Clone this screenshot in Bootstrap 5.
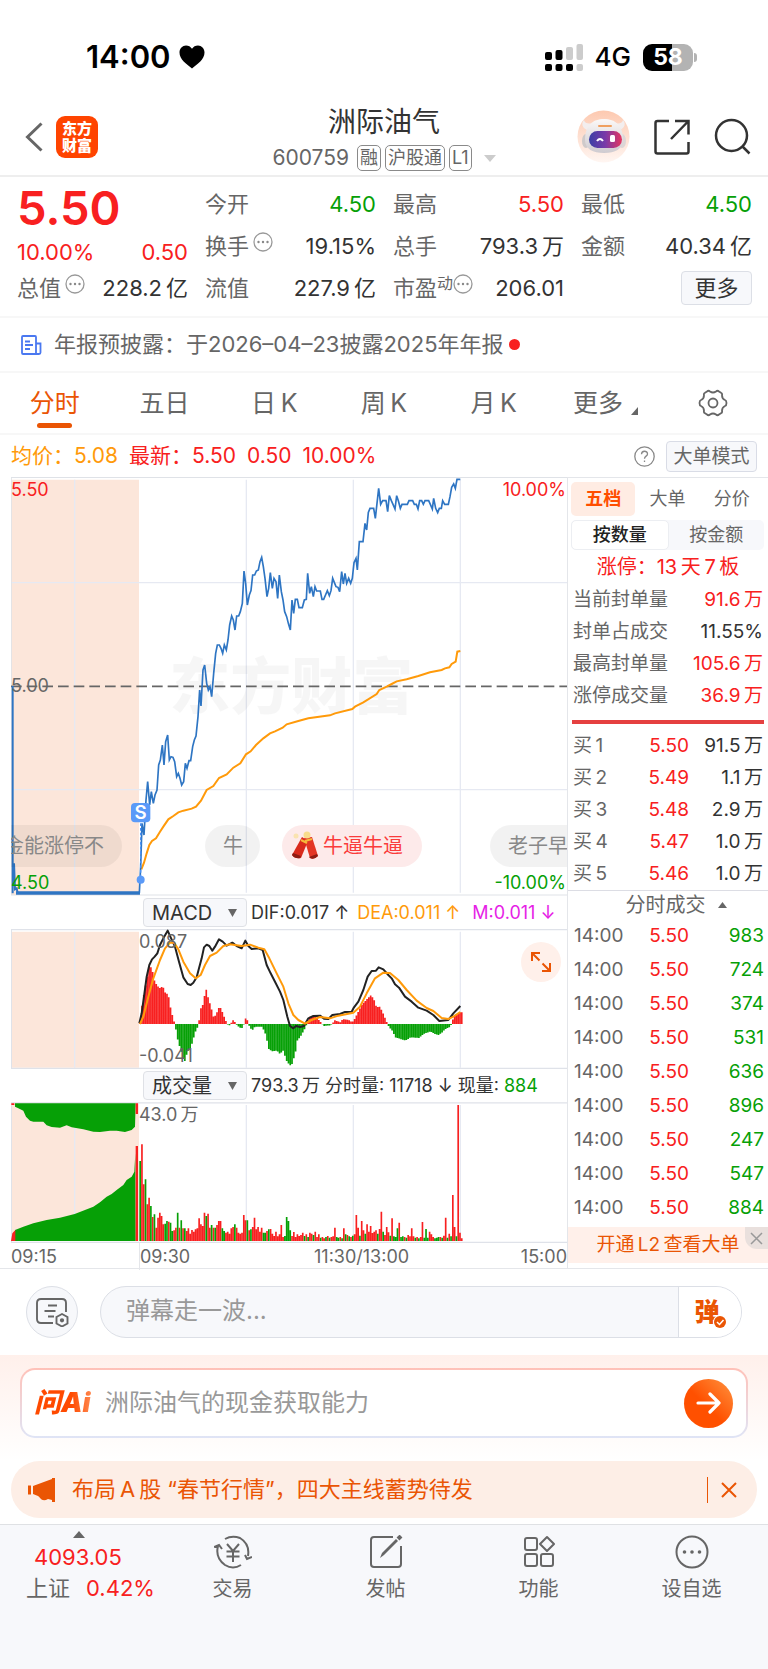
<!DOCTYPE html>
<html lang="zh-CN">
<head>
<meta charset="utf-8">
<meta name="viewport" content="width=device-width, initial-scale=1">
<title>洲际油气 600759</title>
<link href="https://cdn.jsdelivr.net/npm/bootstrap@5.3.0/dist/css/bootstrap.min.css" rel="stylesheet">
<style>
:root{--up:#f82020;--down:#06a006;--accent:#ea5504;--ink:#333;--muted:#666;--rule:#e4e6ea;--soft:#f7f8fb}
body{font-family:Inter,"Noto Sans CJK SC",sans-serif;font-size:22px;line-height:1.2;color:var(--ink);background:#fff}
svg{display:block;flex:none}
a{color:inherit;text-decoration:none}
.up{color:var(--up)}.down{color:var(--down)}.soft{color:var(--muted)}.accent{color:var(--accent)}.avg{color:#ff9a0a}.violet{color:#e61ee6}
.plain{border:0;background:none;padding:0;color:inherit;line-height:1}

.statusbar{padding:38px 71px 22px 86px;height:98px;color:#000}
.clock{font-size:31px;font-weight:600;line-height:38px}
.net{font-size:26px;font-weight:500}
.battery{width:50px;height:27px;border-radius:9px;background:linear-gradient(90deg,#000 58%,#b3b3b3 58%);color:#fff;font-size:23px;font-weight:700;line-height:27px}
.nub{width:3px;height:9px;margin-left:1px;border-radius:0 4px 4px 0;background:#b3b3b3}

.topbar{height:79px;border-bottom:2px solid #eee;padding:0 17px}
.applogo{width:42px;height:42px;border-radius:9px;background:#ff4400;color:#fff;font-size:15px;font-weight:900;line-height:17px;margin-left:13px}
.titlebox{padding-top:5px}
.stockname{font-size:28px;line-height:30px;font-weight:400;margin:0 0 8px}
.code{font-size:21px;line-height:26px;color:var(--muted)}
.tagbox{border:1px solid #8a8a8a;border-radius:5px;font-size:18px;line-height:24px;padding:0 2px}

.quotes{display:grid;grid-template-columns:repeat(4,1fr);column-gap:17px;grid-auto-rows:42px;align-items:center;padding:6px 16px 7px 17px;height:139px}
.quotes>div{display:flex;justify-content:space-between;align-items:center}
.quotes .label{color:var(--muted);display:flex;align-items:center}
.quotes .bigprice{font-size:47px;font-weight:600;line-height:42px;padding-top:7px}
.quotes .change{padding-top:12px}
.supe{font-size:16px;align-self:flex-start}
.morebtn{width:71px;height:34px;border:1px solid #dcdfe6;border-radius:4px;background:var(--soft);color:var(--ink);padding:0;line-height:1}

.notice{height:57px;border-top:2px solid #f7f7f7;border-bottom:2px solid #f7f7f7;padding:0 20px;color:var(--muted)}
.reddot{width:11px;height:11px;border-radius:50%;background:var(--up);margin-left:5px}
.periods{display:grid;grid-template-columns:repeat(7,1fr);height:62px;border-bottom:2px solid #f7f7f7;font-size:25px;color:var(--muted)}
.periods>*{display:flex;align-items:center;justify-content:center;position:relative}
.periods .on{color:var(--accent)}
.periods .on::after{content:"";position:absolute;bottom:5px;width:35px;height:5px;border-radius:3px;background:var(--accent)}
.summary{height:42px;padding:0 11px;font-size:21px;gap:11px}
.modebtn{width:91px;height:31px;border:1px solid #d9dce6;border-radius:4px;background:var(--soft);font-size:19px;color:var(--muted);padding:0;line-height:1}

.board{padding-left:11px;border-bottom:1px solid var(--rule)}
.plot{position:relative;overflow:hidden;font-size:18px;line-height:20px}
.plot>svg{width:100%;height:100%}
.plot-price{height:419px}.plot-macd{height:140px}.plot-vol{height:141px}
.tick{position:absolute;left:0}
.tick.end{left:auto;right:1px}
.tick.inner{left:23%}
.t-top{top:3px}.t-mid{top:199px}.t-bottom{bottom:3px}
.danmaku{position:absolute;left:0;right:0;top:348px;white-space:nowrap;font-size:20px;line-height:42px;color:#888}
.bubble{border-radius:21px;background:rgba(0,0,0,.05);padding:0 18px;flex:none}
.bubble.cut{width:111px;border-radius:0 21px 21px 0;padding:0 18px 0 0;display:flex;justify-content:flex-end;overflow:hidden}
.bubble.b2{margin-left:83px;width:55px}
.bubble.hot{margin-left:22px;background:#fdeaea;color:#fa3c3c;padding:0 18px 0 9px;width:140px}
.bubble.b4{margin-left:68px;padding-right:60px}
.expandbtn{position:absolute;right:6px;top:13px;width:40px;height:40px;border-radius:50%;background:#fff0ea;border:0;padding:0}
.toolbar{height:33px;padding-left:132px;font-size:18px;white-space:nowrap}
.picker{position:relative}
.picker select{appearance:none;width:104px;height:29px;border:1px solid #dfe1e6;border-radius:4px;background:var(--soft);font-size:20px;color:var(--ink);padding:0 8px;line-height:26px}
.picker svg{position:absolute;right:10px;top:11px;pointer-events:none}
.timeaxis{display:grid;grid-template-columns:128fr 175fr 253fr;font-size:18px;line-height:27px;height:25px;color:var(--muted)}
.timeaxis .tk{border-left:1px solid var(--rule)}

.side{width:201px;flex:none;border-left:1px solid var(--rule);border-top:1px solid var(--rule);padding-top:4px;font-size:19px}
.sidetabs{padding:0 4px 4px 3px}
.sidetabs button{flex:1;height:34px;border-radius:5px;font-size:18px;color:var(--muted)}
.sidetabs .on{background:#ffece3;color:#ff4e00;font-weight:700}
.seg{margin:0 4px 0 3px;background:var(--soft);border-radius:5px;height:30px}
.seg button{flex:1;font-size:18px;color:var(--muted)}
.seg .on{background:#fff;border:1px solid #eceef2;border-radius:5px;color:#222;font-weight:500}
.streak{line-height:34px;font-size:20px}
.kv{padding:0 5px;line-height:32px}
.divbar{height:4px;margin:8px 4px 6px;background:#e54040}
.grid3{width:100%;border-collapse:collapse;table-layout:fixed}
.grid3 td,.grid3 th{padding:0;font-weight:400}
.grid3 td:nth-child(2){text-align:right;width:55px}
.grid3 td:last-child{text-align:right}
.bids{line-height:32px}.bids th{padding-left:5px;width:66px}.bids td:last-child{padding-right:5px}
.dealhead{border-top:1px solid #dcdde4;line-height:28px;font-size:20px;width:100%}
.deals{line-height:34px}.deals td:first-child{padding-left:6px;width:66px}.deals td:last-child{padding-right:4px}
.l2{position:relative;margin-top:2px;height:36px;background:#fff0ea;line-height:36px;font-size:19px}
.l2 button{position:absolute;right:0;top:0;width:23px;height:22px;background:#e9e0dd;border-radius:0 0 0 12px}

.chatrow{padding:17px 26px 17px;gap:22px}
.roundbtn{width:52px;height:52px;border-radius:50%;border:1px solid #dcdfe6;background:var(--soft);padding:0;flex:none}
.chatbox{height:52px;border:1px solid #dcdfe6;border-radius:26px;background:var(--soft);overflow:hidden}
.chatbox input{border:0;background:none;font-size:24px;padding:0 25px 2px;min-width:0;outline:0;color:var(--muted)}
.chatbox input::placeholder,.aibox input::placeholder{color:#999;opacity:1}
.chatbox button{width:63px;border:0;border-left:1px solid #dcdfe6;background:#fff;position:relative;padding:0 6px 0 0;font-size:25px;font-weight:900;color:var(--accent);line-height:1}
.chatbox button svg{position:absolute;left:34px;top:28px}
.aizone{padding:13px 20px 23px;background:linear-gradient(#fff0eb,#fff)}
.aibox{height:70px;border:2px solid transparent;border-radius:15px;background:linear-gradient(#fff,#fff) padding-box,linear-gradient(#ffc1b8,#dfe4f6) border-box;padding:0 13px 0 12px}
.ailogo{font-size:27px;font-weight:900;font-style:italic;background:linear-gradient(90deg,#ff4a00 60%,#ff9560);-webkit-background-clip:text;color:transparent;white-space:nowrap;width:62px}
.aibox input{border:0;font-size:24px;padding:0 0 0 9px;min-width:0;outline:0}
.gobtn{width:49px;height:49px;border-radius:50%;border:0;padding:0;background:linear-gradient(45deg,#ff5000 45%,#ff9440)}
.promo{margin:0 11px 6px;height:57px;border-radius:29px;background:#fdeee6;padding:0 16px 0 17px;color:var(--accent)}
.promo a{margin-left:16px}
.vline{width:1px;height:26px;background:var(--accent);margin-right:13px}
.dock{display:grid;grid-template-columns:156px repeat(4,1fr);background:var(--soft);border-top:1px solid #dfe1e4;height:145px;padding-top:6px;color:var(--muted);font-size:20px}
.dock>a{display:flex;flex-direction:column;align-items:center;padding-top:4px}
.dock .cap{line-height:26px;margin-top:7px}
.dock .quote{align-items:flex-start;padding:0 0 0 26px}
.quote svg{margin-left:47px}
.index{font-size:22px;line-height:31px}
</style>
</head>
<body>

<div class="statusbar d-flex justify-content-between">
  <div class="d-flex align-items-center gap-2">
    <span class="clock">14:00</span>
    <svg width="26" height="24" viewBox="0 0 26 24"><path d="M13 23.5C7.500 19 .5 14.500.5 7.500.5 3.500 3.500.5 7 .5c2.500 0 4.700 1.200 6 3.300C14.300 1.700 16.500.5 19 .5c3.500 0 6.500 3 6.500 7 0 7-7 11.500-12.500 16z"/></svg>
  </div>
  <div class="d-flex align-items-center">
    <svg width="38" height="27" viewBox="0 0 38 27"><g><rect y="8" width="7" height="8" rx="2"/><rect x="10.500" y="6" width="7" height="10" rx="2"/><rect y="20" width="7" height="7" rx="2"/><rect x="10.500" y="20" width="7" height="7" rx="2"/><rect x="21" y="20" width="7" height="7" rx="2"/></g><g fill="#ccc"><rect x="21" y="3" width="7" height="13" rx="2"/><rect x="31.500" width="6.500" height="16" rx="2"/><rect x="31.500" y="20" width="6.500" height="7" rx="2"/></g></svg>
    <span class="net mx-2 ps-1 pe-1">4G</span>
    <span class="battery text-center">58</span><span class="nub"></span>
  </div>
</div>

<header class="topbar d-flex align-items-center">
  <div class="d-flex align-items-center flex-fill w-25 ps-2">
    <button class="plain" aria-label="返回"><svg width="18" height="30" viewBox="0 0 18 30"><path d="M16.500 1.500 2.500 15l14 13.500" fill="none" stroke="#666" stroke-width="3"/></svg></button>
    <div class="applogo d-flex flex-column justify-content-center text-center"><span>东方</span><span>财富</span></div>
  </div>
  <div class="titlebox text-center">
    <h1 class="stockname">洲际油气</h1>
    <div class="code d-flex align-items-center justify-content-center gap-1"><span class="me-1">600759</span><span class="tagbox">融</span><span class="tagbox">沪股通</span><span class="tagbox">L1</span>
      <svg class="ms-2" width="12" height="7"><path d="M0 0h12L6 7z" fill="#ccc"/></svg></div>
  </div>
  <div class="d-flex align-items-center justify-content-end flex-fill w-25">
    <button class="plain" aria-label="智能助手"><svg width="53" height="53" viewBox="0 0 53 53">
      <defs><linearGradient id="rb" x1="0" y1="0" x2="0" y2="1"><stop offset="0" stop-color="#fdc9b0"/><stop offset="1" stop-color="#fff6f2"/></linearGradient><linearGradient id="rf"><stop offset="0" stop-color="#3a3fa5"/><stop offset=".5" stop-color="#7a3aa8"/><stop offset="1" stop-color="#e5365f"/></linearGradient><linearGradient id="rh" x1="0" y1="0" x2="0" y2="1"><stop offset="0" stop-color="#fbf8f7"/><stop offset="1" stop-color="#cfcbd0"/></linearGradient></defs>
      <circle cx="26.500" cy="26.500" r="26" fill="url(#rb)"/><path d="M10 20C5 18 4 13 7 10c1 4 5 4 8 3zM43 20c5-2 6-7 3-10-1 4-5 4-8 3z" fill="#f3eeee"/>
      <ellipse cx="9" cy="31" rx="4" ry="7" fill="#cfcaca"/><ellipse cx="45" cy="31" rx="4" ry="7" fill="#ddd6d6"/>
      <path d="M8 30C8 15 16 9 27 9s19 6 19 21c0 9-8 13-19 13S8 39 8 30z" fill="url(#rh)"/>
      <rect x="12" y="21" width="33" height="17" rx="8.500" fill="url(#rf)"/><rect x="21" y="15" width="14" height="2" rx="1" fill="#f0a060"/><path d="M20 31q3-4 6 0" stroke="#fff" stroke-width="2" fill="none"/><rect x="33" y="25" width="5" height="7" rx="1.500" fill="#fff"/></svg></button>
    <button class="plain ms-4" aria-label="分享"><svg width="36" height="36" viewBox="0 0 36 36" fill="none" stroke="#333" stroke-width="2.500"><path d="M15 2H3.500Q1.500 2 1.500 4v28.500q0 2 2 2h29q2 0 2-2V23M21 2h13.500v13.500M34 2.500 17 20"/></svg></button>
    <button class="plain ms-4" aria-label="搜索"><svg width="37" height="37" viewBox="0 0 37 37" fill="none" stroke="#333" stroke-width="2.500"><circle cx="17.500" cy="17.500" r="15.500"/><path d="m28.500 28.500 7 7"/></svg></button>
  </div>
</header>

<section class="quotes">
  <div class="bigprice up">5.50</div>
  <div><span class="label">今开</span><span class="down">4.50</span></div>
  <div><span class="label">最高</span><span class="up">5.50</span></div>
  <div><span class="label">最低</span><span class="down">4.50</span></div>
  <div class="up change"><span>10.00%</span><span>0.50</span></div>
  <div><span class="label">换手<svg class="ms-1 mb-2" width="20" height="20" viewBox="0 0 20 20"><circle cx="10" cy="10" r="9" fill="none" stroke="#999" stroke-width="1.300"/><g fill="#888"><circle cx="5.500" cy="10" r="1.200"/><circle cx="10" cy="10" r="1.200"/><circle cx="14.500" cy="10" r="1.200"/></g></svg></span><span>19.15%</span></div>
  <div><span class="label">总手</span><span>793.3&#8201;万</span></div>
  <div><span class="label">金额</span><span>40.34&#8201;亿</span></div>
  <div><span class="label">总值<svg class="ms-1 mb-2" width="20" height="20" viewBox="0 0 20 20"><circle cx="10" cy="10" r="9" fill="none" stroke="#999" stroke-width="1.300"/><g fill="#888"><circle cx="5.500" cy="10" r="1.200"/><circle cx="10" cy="10" r="1.200"/><circle cx="14.500" cy="10" r="1.200"/></g></svg></span><span>228.2&#8201;亿</span></div>
  <div><span class="label">流值</span><span>227.9&#8201;亿</span></div>
  <div><span class="label">市盈<span class="supe">动</span><svg class="mb-2" width="20" height="20" viewBox="0 0 20 20"><circle cx="10" cy="10" r="9" fill="none" stroke="#999" stroke-width="1.300"/><g fill="#888"><circle cx="5.500" cy="10" r="1.200"/><circle cx="10" cy="10" r="1.200"/><circle cx="14.500" cy="10" r="1.200"/></g></svg></span><span>206.01</span></div>
  <div><button class="morebtn ms-auto">更多</button></div>
</section>

<a href="#" class="notice d-flex align-items-center">
  <svg width="22" height="20" viewBox="0 0 22 20" fill="none" stroke="#4a78f0" stroke-width="1.800"><path d="M16 19V2q0-1-1-1H3Q2 1 2 2v16q0 1 1 1h16q1.500 0 1.500-1.500V8.500H16M5 6.500h5M5 10h8M5 14h5"/></svg>
  <span class="ms-2 ps-1">年报预披露：于2026–04–23披露2025年年报</span><span class="reddot"></span>
</a>

<nav class="periods">
  <a href="#" class="on">分时</a><a href="#">五日</a><a href="#">日&#8201;K</a><a href="#">周&#8201;K</a><a href="#">月&#8201;K</a>
  <a href="#" class="ps-1">更多<svg class="ms-2 mt-3" width="7" height="8"><path d="M7 0v8H0z" fill="#666"/></svg></a>
  <button class="plain" aria-label="设置"><svg width="30" height="28" viewBox="0 0 30 28" fill="none" stroke="#666" stroke-width="1.800" stroke-linejoin="round"><path d="M9 2.500q1.500-1.500 3 0 3 2 6 0 1.500-1.500 3 0l2 1.200q1.500.8 1 2.500 0 3.500 3 4.800 1.500.5 1.500 3t-1.500 3q-3 1.300-3 4.800.5 1.700-1 2.500l-2 1.200q-1.500 1.500-3 0-3-2-6 0-1.500 1.500-3 0l-2-1.200q-1.500-.8-1-2.500 0-3.500-3-4.800-1.500-.5-1.500-3t1.500-3q3-1.300 3-4.800-.5-1.700 1-2.500z"/><circle cx="15" cy="14" r="4.500"/></svg></button>
</nav>

<div class="summary d-flex align-items-center">
  <span class="avg">均价：5.08</span>
  <span class="up">最新：5.50</span><span class="up">0.50</span><span class="up">10.00%</span>
  <button class="plain ms-auto" aria-label="说明"><svg width="21" height="21" viewBox="0 0 21 21" fill="none" stroke="#888" stroke-width="1.300"><circle cx="10.500" cy="10.500" r="9.700"/><path d="M7.500 8.300c0-4 6-4 6-.4 0 2.300-3 2.200-3 4.800M10.500 14.500V16"/></svg></button>
  <button class="modebtn">大单模式</button>
</div>

<main class="board d-flex">
  <div class="flex-fill">
    <div class="plot plot-price">
      <svg viewBox="33 21 1668 1257" preserveAspectRatio="none">
        <path d="M33 29H417V1275H33z" fill="#fce6da"/>
        <path d="M224 29V1268M739 29V1268M1060 29V1268M1381 29V1268M33 338H1701M33 959H1701" stroke="#e6e9f2" stroke-width="4" fill="none"/>
        <path d="M33 22.500H1701M33 1275H1701M34 22V1275" stroke="#dfe2e7" stroke-width="3" fill="none"/>
        <text x="508" y="716" font-size="183" font-weight="900" fill="#000" fill-opacity=".035">东方财富</text>
        <path d="M33 649H1701" stroke="#666" stroke-width="5" stroke-dasharray="32 15"/>
        <polyline fill="none" stroke="#ff9a0a" stroke-width="6" points="424,1198 432,1178 440,1150 448,1125 456,1113 468,1105 480,1085 492,1067 505,1048 520,1038 535,1027 550,1022 575,1016 588,1010 603,992 620,960 640,948 657,924 680,913 700,893 721,880 738,853 752,844 768,825 790,805 810,790 825,784 848,773 860,763 895,753 925,745 990,736 1005,730 1057,717 1065,710 1090,697 1130,672 1138,660 1160,650 1175,642 1190,634 1220,628 1255,618 1290,607 1325,600 1335,595 1348,592 1355,582 1367,575 1372,545 1381,543"/>
        <path d="M38 648V1270M42 1180 45 1258 50 1255 53 1269" stroke="#2e75c3" stroke-width="6" fill="none"/>
        <path d="M48 1269H420" stroke="#2e75c3" stroke-width="11"/>
        <polyline fill="none" stroke="#2e75c3" stroke-width="5" points="418,1269 422,1190 426,1060 432,1095 438,990 443,935 449,1005 454,965 460,1000 465,975 471,960 476,885 481,870 487,825 492,885 497,815 503,795 508,870 513,860 519,862 524,875 530,920 535,910 540,925 545,945 551,935 556,880 561,895 567,872 572,872 578,830 583,810 588,798 594,740 599,660 603,708 609,600 614,585 620,640 625,660 630,650 635,680 641,610 647,550 652,525 658,525 663,535 668,550 673,525 679,540 684,510 689,465 695,438 700,450 705,480 710,438 716,438 721,425 727,400 732,303 737,340 742,405 748,375 753,362 758,315 764,315 769,303 775,300 780,275 785,262 790,290 795,325 801,380 806,355 811,308 817,355 822,325 828,335 833,385 838,315 844,365 849,390 854,425 860,440 865,460 871,480 876,390 881,430 886,388 892,388 897,413 907,413 913,390 919,388 923,310 929,370 934,350 940,380 945,350 950,363 961,363 966,388 971,388 982,362 988,377 993,362 998,325 1008,350 1014,352 1019,365 1025,305 1030,342 1035,310 1040,340 1046,325 1052,340 1057,325 1062,278 1068,265 1072,300 1078,215 1089,215 1095,160 1100,180 1105,127 1110,115 1121,115 1126,145 1131,100 1136,55 1142,103 1148,92 1158,92 1163,125 1168,77 1174,92 1179,103 1185,117 1190,77 1195,92 1201,115 1206,103 1222,103 1227,92 1238,92 1243,103 1249,103 1254,117 1259,92 1265,92 1270,103 1275,92 1286,92 1291,103 1297,117 1301,85 1307,115 1313,128 1318,115 1324,115 1328,92 1334,103 1345,103 1350,80 1355,52 1361,42 1366,55 1371,28 1381,28"/>
        <path d="M422 1060V1225" stroke="#4a90f5" stroke-width="4" stroke-dasharray="8 6"/><circle cx="422" cy="1229" r="12" fill="#5a9af8"/>
        <rect x="393" y="999" width="58" height="58" rx="12" fill="#5a9af8"/><text x="422" y="1048" font-size="56" font-weight="600" text-anchor="middle" fill="#fff">S</text>
      </svg>
      <span class="tick t-top up">5.50</span><span class="tick t-mid soft">5.00</span><span class="tick t-bottom down">4.50</span>
      <span class="tick end t-top up">10.00%</span><span class="tick end t-bottom down">-10.00%</span>
      <div class="danmaku d-flex">
        <span class="bubble cut">金能涨停不</span><span class="bubble b2">牛</span>
        <span class="bubble hot d-flex align-items-center"><svg class="me-1" width="28" height="30" viewBox="0 0 28 30"><path d="m11 6 6 4-7 17q-6 1-9-3z" fill="#d92a1c"/><path d="m13 7 8-1 6 19q-4 4-8 2z" fill="#e33524"/><path d="m2 22 8 3-1 2q-5 1-8-3zM18 26l8-3 1 2q-4 4-8 2z" fill="#8e1c12"/><path d="m10 9 6 3M14 10l7-2" stroke="#f6b93b" stroke-width="2"/><circle cx="16" cy="4" r="3.500" fill="#f8dc8c"/><circle cx="5" cy="5" r="2.500" fill="#fae3b0"/></svg>牛逼牛逼</span>
        <span class="bubble b4">老子早</span>
      </div>
    </div>

    <div class="toolbar d-flex align-items-center">
      <label class="picker"><select aria-label="副图指标"><option>MACD</option></select><svg width="9" height="8"><path d="M0 0h9L4.500 8z" fill="#666"/></svg></label>
      <span class="ms-1">DIF:0.017 ↑</span><span class="avg ms-2">DEA:0.011 ↑</span><span class="violet ms-2 ps-1">M:0.011 ↓</span>
    </div>

    <div class="plot plot-macd">
      <svg viewBox="33 117 1668 420" preserveAspectRatio="none">
        <path d="M33 125H417V533H33z" fill="#fce6da"/>
        <path d="M224 125V533M739 125V533M1060 125V533M1381 125V533" stroke="#e6e9f2" stroke-width="4"/>
        <path d="M33 118.500H1701M33 535.500H1701M34 118V535" stroke="#dfe2e9" stroke-width="4"/>
        <path id="histUp" fill="#f82020"/><path id="histDown" fill="#06a006"/>
        <polyline fill="none" stroke="#222" stroke-width="6" stroke-linejoin="round" points="418,400 425,370 432,320 440,260 448,225 456,208 464,200 472,190 480,165 490,145 503,122 512,142 525,170 537,215 550,262 563,282 572,285 580,278 590,262 597,235 605,205 612,172 620,164 628,168 637,182 645,170 657,148 668,155 680,167 697,158 710,168 725,175 736,152 745,168 755,177 775,175 788,180 800,225 812,250 825,275 840,305 850,330 862,380 870,408 880,415 888,408 900,411 912,408 925,385 940,378 960,377 972,386 985,387 997,375 1020,372 1035,366 1055,365 1062,352 1075,335 1090,300 1103,260 1115,243 1128,242 1136,232 1150,238 1165,255 1175,265 1185,283 1197,293 1215,320 1235,335 1255,353 1280,362 1300,375 1318,393 1345,390 1360,370 1381,348"/>
        <polyline fill="none" stroke="#ff9a0a" stroke-width="6" stroke-linejoin="round" points="420,402 430,380 445,320 460,265 480,210 495,175 510,158 522,158 535,178 550,215 570,250 587,265 602,255 615,225 630,198 650,188 670,168 690,163 725,168 750,164 775,173 793,178 808,205 830,250 850,290 865,340 880,375 895,390 915,401 935,390 960,381 990,385 1015,377 1060,368 1080,350 1100,310 1125,265 1150,248 1170,249 1195,270 1220,300 1250,332 1280,354 1300,363 1325,384 1345,387 1360,380 1381,366"/>
      </svg>
      <span class="tick inner t-top soft">0.087</span><span class="tick inner t-bottom soft">-0.041</span>
      <button class="expandbtn" aria-label="全屏"><svg class="m-auto" width="20" height="20" viewBox="0 0 20 20" fill="none" stroke="#ea5504" stroke-width="2"><path d="M1 9V1h8M1 1l7.500 7.500M19 11v8h-8M19 19l-7.500-7.500"/></svg></button>
    </div>

    <div class="toolbar d-flex align-items-center">
      <label class="picker"><select aria-label="副图指标"><option>成交量</option></select><svg width="9" height="8"><path d="M0 0h9L4.500 8z" fill="#666"/></svg></label>
      <span class="ms-1">793.3&#8201;万 分时量: 11718 ↓ 现量: <span class="down">884</span></span>
    </div>

    <div class="plot plot-vol">
      <svg viewBox="33 636 1668 423" preserveAspectRatio="none">
        <path d="M33 640H417V1053H33z" fill="#fce6da"/>
        <path d="M224 645V1053M739 645V1053M1060 645V1053M1381 645V1053" stroke="#e6e9f2" stroke-width="4"/>
        <path d="M33 638.500H1701M33 1057H1701M34 638V1057" stroke="#dfe2e9" stroke-width="4"/>
        <path d="M45 1053V1020L70 1010 100 1000 140 990 180 983 224 972 280 950 300 937 320 920 335 912 350 900 370 885 380 870 395 860 403 845 406 790 407 1053zM45 640V650L55 655 70 662 78 680 90 692 100 695 130 695 140 706 155 711 180 713 200 706 215 712 250 718 280 725 300 726 330 722 350 722 375 726 395 720 405 710 407 640z" fill="#06a006"/>
        <path d="M33 1053 37 1030 46 1020V1053zM407 768H414V1053H407zM407 640H414V672H407zM34 640H43V645H34z" fill="#f82020"/>
        <path id="volUp" fill="#f82020"/><path id="volDown" fill="#06a006"/>
      </svg>
      <span class="tick inner t-top soft">43.0&#8201;万</span>
    </div>
    <div class="timeaxis"><span>09:15</span><span class="tk">09:30</span><span class="d-flex justify-content-between"><span>11:30/13:00</span><span>15:00</span></span></div>
  </div>

  <aside class="side">
    <div class="sidetabs d-flex"><button class="plain on">五档</button><button class="plain">大单</button><button class="plain">分价</button></div>
    <div class="seg d-flex"><button class="plain on">按数量</button><button class="plain">按金额</button></div>
    <div class="streak up text-center">涨停：13&#8201;天&#8201;7&#8201;板</div>
    <div class="kv d-flex justify-content-between"><span class="soft">当前封单量</span><span class="up">91.6&#8201;万</span></div>
    <div class="kv d-flex justify-content-between"><span class="soft">封单占成交</span><span>11.55%</span></div>
    <div class="kv d-flex justify-content-between"><span class="soft">最高封单量</span><span class="up">105.6&#8201;万</span></div>
    <div class="kv d-flex justify-content-between"><span class="soft">涨停成交量</span><span class="up">36.9&#8201;万</span></div>
    <div class="divbar"></div>
    <table class="grid3 bids"><tbody>
      <tr><th class="soft" scope="row">买&#8201;1</th><td class="up">5.50</td><td>91.5&#8201;万</td></tr>
      <tr><th class="soft" scope="row">买&#8201;2</th><td class="up">5.49</td><td>1.1&#8201;万</td></tr>
      <tr><th class="soft" scope="row">买&#8201;3</th><td class="up">5.48</td><td>2.9&#8201;万</td></tr>
      <tr><th class="soft" scope="row">买&#8201;4</th><td class="up">5.47</td><td>1.0&#8201;万</td></tr>
      <tr><th class="soft" scope="row">买&#8201;5</th><td class="up">5.46</td><td>1.0&#8201;万</td></tr>
    </tbody></table>
    <div class="dealhead soft d-flex align-items-center justify-content-center ps-3">分时成交<svg class="ms-2 ps-1" width="13" height="6" viewBox="0 0 9 6"><path d="M0 6h9L4.500 0z" fill="#666"/></svg></div>
    <table class="grid3 deals"><tbody>
      <tr><td class="soft">14:00</td><td class="up">5.50</td><td class="down">983</td></tr>
      <tr><td class="soft">14:00</td><td class="up">5.50</td><td class="down">724</td></tr>
      <tr><td class="soft">14:00</td><td class="up">5.50</td><td class="down">374</td></tr>
      <tr><td class="soft">14:00</td><td class="up">5.50</td><td class="down">531</td></tr>
      <tr><td class="soft">14:00</td><td class="up">5.50</td><td class="down">636</td></tr>
      <tr><td class="soft">14:00</td><td class="up">5.50</td><td class="down">896</td></tr>
      <tr><td class="soft">14:00</td><td class="up">5.50</td><td class="down">247</td></tr>
      <tr><td class="soft">14:00</td><td class="up">5.50</td><td class="down">547</td></tr>
      <tr><td class="soft">14:00</td><td class="up">5.50</td><td class="down">884</td></tr>
    </tbody></table>
    <div class="l2 accent text-center"><a href="#">开通&#8201;L2&#8201;查看大单</a><button class="plain" aria-label="关闭"><svg class="m-auto" width="13" height="13"><path d="M1 1l11 11M12 1 1 12" stroke="#999" stroke-width="1.500"/></svg></button></div>
  </aside>
</main>

<form class="chatrow d-flex">
  <button type="button" class="roundbtn" aria-label="弹幕设置"><svg class="m-auto" width="33" height="29" viewBox="0 0 33 29" fill="none" stroke="#666" stroke-width="1.900"><path d="M17 25H5q-4 0-4-4V5q0-4 4-4h21q4 0 4 4v9M12 7.500h9M8.500 13h11M12 18.500h6"/><path d="m26 16 5.500 3v6.500L26 28.500l-5.500-3V19z"/><circle cx="26" cy="22.300" r="1.200" fill="#666"/></svg></button>
  <div class="chatbox d-flex flex-fill">
    <input class="flex-fill" type="text" placeholder="弹幕走一波..." aria-label="弹幕">
    <button type="button" aria-label="弹幕开关">弹<svg width="14" height="14" viewBox="0 0 14 14"><circle cx="7" cy="7" r="7" fill="#fff"/><circle cx="7" cy="7" r="6" fill="#ea5504"/><path d="m4 7 2.500 2.500L10.500 5" fill="none" stroke="#fff" stroke-width="1.500"/></svg></button>
  </div>
</form>

<section class="aizone">
  <div class="aibox d-flex align-items-center">
    <span class="ailogo">问Ai</span>
    <input class="flex-fill" type="text" placeholder="洲际油气的现金获取能力" aria-label="问AI">
    <button class="gobtn" aria-label="提问"><svg class="m-auto" width="25" height="22" viewBox="0 0 25 22" fill="none" stroke="#fff" stroke-width="3.200" stroke-linecap="round" stroke-linejoin="round"><path d="M2 11h21M14 2l9 9-9 9"/></svg></button>
  </div>
</section>

<div class="promo d-flex align-items-center">
  <svg width="28" height="24" viewBox="0 0 28 24" fill="#ea5504"><path d="M0 7.500h3v9H0zM5 8 24 1V0h3v24h-3v-2l-4-1q-5 3-8-1-.5-1-2-2l-5-2z"/></svg>
  <a href="#">布局&#8201;A&#8201;股 “春节行情”，四大主线蓄势待发</a>
  <span class="vline ms-auto"></span>
  <button class="plain me-1" aria-label="关闭"><svg width="16" height="16"><path d="M1 1l14 14M15 1 1 15" stroke="#ea5504" stroke-width="2"/></svg></button>
</div>

<nav class="dock">
  <a href="#" class="quote"><svg width="12" height="7"><path d="M0 7h12L6 0z" fill="#666"/></svg>
    <span class="index up mt-1 ms-2">4093.05</span><span class="index">上证<span class="up ms-3">0.42%</span></span></a>
  <a href="#"><svg width="38" height="34" viewBox="0 0 38 34" fill="none" stroke="#666" stroke-width="2"><path d="M11 4Q18 0 26 3q10 6 8 18M27 30q-8 5-16 0-10-7-7-19M0 12l5-2 3 4M38 22l-5 2-2-4M13 9l6 7 6-7M19 16v11M12.500 16.500h13M12.500 21.500h13"/></svg><span class="cap">交易</span></a>
  <a href="#"><svg width="34" height="34" viewBox="0 0 34 34" fill="none" stroke="#666" stroke-width="2"><path d="M24 2H5Q2 2 2 5v24q0 3 3 3h24q3 0 3-3V11"/><path d="m11 23 2-5L27 4l2 2-14 14z" fill="#666" stroke="none"/><path d="m29 4 3-3" stroke-width="4"/></svg><span class="cap">发帖</span></a>
  <a href="#"><svg width="32" height="34" viewBox="0 0 32 34" fill="none" stroke="#666" stroke-width="2"><rect x="2" y="3" width="12" height="12" rx="2"/><rect x="2" y="19" width="12" height="12" rx="2"/><rect x="18" y="19" width="12" height="12" rx="2"/><path d="m24 2 7 7-7 7-7-7z" stroke-linejoin="round"/></svg><span class="cap">功能</span></a>
  <a href="#"><svg width="34" height="34" viewBox="0 0 34 34"><circle cx="17" cy="17" r="15.500" fill="none" stroke="#666" stroke-width="2"/><g fill="#666"><circle cx="9.500" cy="17" r="1.800"/><circle cx="17" cy="17" r="1.800"/><circle cx="24.500" cy="17" r="1.800"/></g></svg><span class="cap">设自选</span></a>
</nav>

<script>
// One bar per minute from 09:30 to 14:00.
const START = 418, PITCH = 5.36, BARS = 181;

// MACD histogram: turning points, interpolated for every minute.
const turns = [[418,0],[425,60],[432,100],[440,140],[447,178],[455,163],[462,130],[470,115],[478,108],[487,113],[495,92],[503,90],[510,50],[516,25],[522,3],[527,-20],[533,-55],[540,-75],[548,-105],[554,-112],[560,-85],[568,-75],[576,-55],[584,-25],[592,-8],[596,12],[600,45],[608,60],[616,108],[624,75],[632,50],[638,22],[645,25],[655,48],[662,48],[668,28],[676,10],[680,0],[686,-5],[692,3],[698,12],[704,5],[710,-5],[720,-12],[728,-12],[732,10],[738,22],[743,2],[747,-8],[755,-20],[763,-8],[785,-8],[795,-30],[805,-75],[815,-82],[830,-80],[838,-90],[848,-80],[858,-110],[868,-125],[875,-120],[885,-85],[890,-50],[900,-38],[910,-20],[917,-5],[922,10],[930,25],[945,22],[955,12],[963,3],[970,-6],[990,-4],[997,3],[1002,12],[1012,8],[1020,5],[1027,15],[1045,12],[1055,5],[1062,15],[1070,30],[1085,60],[1100,75],[1112,87],[1122,70],[1128,50],[1138,52],[1145,38],[1155,15],[1160,3],[1165,-8],[1175,-20],[1185,-40],[1200,-45],[1215,-50],[1230,-40],[1255,-42],[1270,-30],[1290,-22],[1303,-30],[1315,-33],[1325,-25],[1335,-15],[1350,-8],[1354,5],[1360,22],[1375,35],[1395,36]];
// Minute volume; a negative value is a falling minute.
const volume = [-240,290,170,-185,110,130,-105,72,-80,40,70,85,75,50,-52,-60,58,-55,-30,32,40,-85,40,-62,38,-38,30,38,22,33,28,35,38,68,50,45,85,-75,82,40,-48,40,-40,48,60,60,-38,-30,25,28,22,38,42,-50,40,25,22,25,78,62,-62,32,-35,42,70,35,42,28,40,-25,-25,30,-35,36,22,15,28,14,20,48,12,-15,-72,-60,-32,15,27,12,20,15,18,25,-15,20,-12,25,22,-18,28,12,20,-10,12,8,-12,15,-10,12,14,40,-12,-10,12,-8,38,-20,18,-14,12,-16,20,78,40,-16,60,32,-22,50,28,45,24,28,32,-22,36,88,-28,18,42,26,-16,68,-14,-12,-38,55,-12,-14,12,-10,18,14,38,14,-10,12,-8,12,57,-10,-36,-10,28,20,12,-8,-10,-12,12,-10,16,70,-10,22,-14,138,42,-14,408,25,8];

function valueAt(x) {
  const k = turns.findIndex(p => p[0] >= x) || 1;
  const [x0, v0] = turns[k - 1], [x1, v1] = turns[k];
  return v0 + (v1 - v0) * (x - x0) / (x1 - x0);
}
let up = '', down = '';
for (let i = 0; i < BARS; i++) {
  const x = START + i * PITCH, v = valueAt(x + 1);
  if (v >= 0) up += `M${x} 402V${402 - v}h5V402z`; else down += `M${x} 402V${402 - v}h5V402z`;
}
histUp.setAttribute('d', up); histDown.setAttribute('d', down);

up = down = '';
volume.forEach((v, i) => {
  const bar = `M${START + i * PITCH} 1053v${-Math.abs(v)}h5V1053z`;
  if (v > 0) up += bar; else down += bar;
});
volUp.setAttribute('d', up); volDown.setAttribute('d', down);
</script>
<script src="https://cdn.jsdelivr.net/npm/bootstrap@5.3.0/dist/js/bootstrap.bundle.min.js"></script>
</body>
</html>
